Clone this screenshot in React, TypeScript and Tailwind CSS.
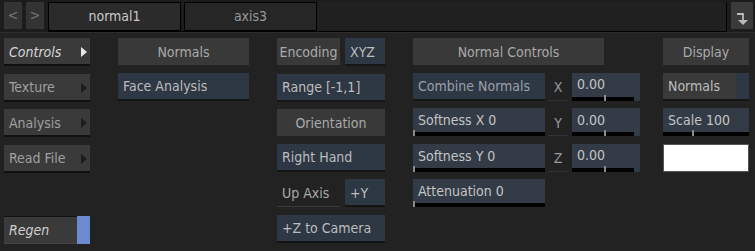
import React from "react";

const font = { fontFamily: '"DejaVu Sans Condensed", "DejaVu Sans", sans-serif' };

function Header({ label, w }: { label: string; w: string }) {
  return (
    <div className={`${w} flex h-[27px] items-center justify-center bg-[#393939] pt-[1px] text-[14px] text-[#a9a9a9]`}>
      {label}
    </div>
  );
}

function MenuButton({ label, active }: { label: string; active?: boolean }) {
  return (
    <div className="flex h-[28px] w-[86px] items-center justify-between border-b-2 border-[#101010] bg-[#3a3a3a] pl-[5px] pr-[3px] pt-[2px]">
      <span className={active ? "text-[14px] italic text-[#d8d8d8]" : "text-[14px] text-[#a0a0a0]"}>{label}</span>
      <span
        className={`h-0 w-0 border-y-[5px] border-l-[6px] border-y-transparent ${
          active ? "border-l-[#e8e8e8]" : "border-l-[#1c1c1c]"
        }`}
      />
    </div>
  );
}

function Field({ label, w, center, muted }: { label: string; w: string; center?: boolean; muted?: boolean }) {
  return (
    <div
      className={`${w} flex h-[28px] items-center border-b-2 border-[#151515] bg-[#2e3744] px-[5px] pt-[2px] text-[14px] ${
        center ? "justify-center" : ""
      } ${muted ? "text-[#9aa0a8]" : "text-[#bdbdbd]"}`}
    >
      {label}
    </div>
  );
}

function Slider({ label, w, tick }: { label: string; w: string; tick: number }) {
  return (
    <div className={`${w} flex h-[28px] flex-col bg-[#333b47]`}>
      <div className="flex flex-1 items-center px-[5px] pt-[1px] text-[14px] text-[#c4c4c4]">{label}</div>
      <div className="relative h-[4px] bg-black">
        <span className="absolute bottom-0 h-[6px] w-[2px] bg-[#8a8a8a]" style={{ left: `${tick}%` }} />
      </div>
    </div>
  );
}

function AxisRow({ axis }: { axis: string }) {
  return (
    <div className="flex h-[28px] items-stretch gap-[4px]">
      <div className="flex w-[20px] items-center justify-center border-b border-[#333] pt-[3px] text-[14px] text-[#9a9a9a]">
        {axis}
      </div>
      <div className="flex w-[68px] flex-col bg-[#333b47]">
        <div className="flex flex-1 items-center px-[5px] text-[14px] text-[#c4c4c4]">0.00</div>
        <div className="relative mr-[6px] h-[4px] bg-black">
          <span className="absolute bottom-0 left-[51%] h-[6px] w-[2px] bg-[#8a8a8a]" />
        </div>
      </div>
    </div>
  );
}

export default function App() {
  return (
    <div className="h-[251px] w-[755px] overflow-hidden bg-[#222222]" style={font}>
      {/* tab strip */}
      <div className="flex h-[33px] items-stretch gap-[4px] border-b border-[#2c2c2c] bg-[#1c1c1c] pl-[4px] pr-[2px] pt-[2px]">
        <div className="mb-[3px] flex w-[18px] items-center justify-center bg-[#333] text-[14px] text-[#777]">&lt;</div>
        <div className="mb-[3px] flex w-[18px] items-center justify-center bg-[#333] text-[14px] text-[#777]">&gt;</div>
        <div className="flex flex-1 border-b border-black">
          <div className="flex w-[133px] items-center justify-center border border-black bg-[#2b2b2b] text-[14px] text-[#c8c8c8]">
            normal1
          </div>
          <div className="ml-[3px] flex w-[133px] items-center justify-center border border-black bg-[#262626] text-[14px] text-[#9a9a9a]">
            axis3
          </div>
          <div className="flex-1 border-r border-black bg-[#202020]" />
        </div>
        <div className="mb-[3px] flex w-[22px] items-end justify-center bg-[#3a3a3a] pb-[3px]">
          <svg width="14" height="16" viewBox="0 0 14 16">
            <path d="M2 4 H8 V11" stroke="#bbb" strokeWidth="1.8" fill="none" />
            <path d="M3 10 H13 L8 15 Z" fill="#bbb" />
          </svg>
        </div>
      </div>

      {/* body */}
      <div className="flex pl-[4px] pt-[5px]">
        <div className="flex w-[86px] flex-col gap-[7.5px]">
          <MenuButton label="Controls" active />
          <MenuButton label="Texture" />
          <MenuButton label="Analysis" />
          <MenuButton label="Read File" />
          <div className="h-[28px]" />
          <div className="flex h-[28px]">
            <div className="flex flex-1 items-center border-t border-[#111] border-b border-b-[#444] bg-[#3a3a3a] pl-[5px] pt-[2px] text-[14px] italic text-[#d0d0d0]">
              Regen
            </div>
            <div className="w-[13px] bg-[#6b8acf]" />
          </div>
        </div>

        <div className="ml-[28px] flex w-[131px] flex-col gap-[7.5px]">
          <Header label="Normals" w="w-[131px]" />
          <Field label="Face Analysis" w="w-[131px]" />
        </div>

        <div className="ml-[28px] flex w-[108px] flex-col gap-[7.5px]">
          <div className="flex gap-[5px]">
            <div className="flex h-[27px] w-[63px] items-center justify-center bg-[#393939] pt-[1px] text-[14px] text-[#a9a9a9]">
              Encoding
            </div>
            <Field label="XYZ" w="w-[40px]" />
          </div>
          <Field label="Range [-1,1]" w="w-[108px]" />
          <Header label="Orientation" w="w-[108px]" />
          <Field label="Right Hand" w="w-[108px]" />
          <div className="flex gap-[5px]">
            <div className="flex h-[28px] w-[63px] items-center border-b border-[#3a3a3a] pl-[5px] pt-[1px] text-[14px] text-[#a9a9a9]">
              Up Axis
            </div>
            <Field label="+Y" w="w-[40px]" />
          </div>
          <Field label="+Z to Camera" w="w-[108px]" />
        </div>

        <div className="ml-[28px] flex w-[227px] flex-col gap-[7.5px]">
          <Header label="Normal Controls" w="w-[191px]" />
          <div className="flex gap-[3px]">
            <div className="flex w-[132px] flex-col gap-[7.5px]">
              <Field label="Combine Normals" w="w-[132px]" muted />
              <Slider label="Softness X 0" w="w-[132px]" tick={0} />
              <Slider label="Softness Y 0" w="w-[132px]" tick={0} />
              <Slider label="Attenuation 0" w="w-[132px]" tick={0} />
            </div>
            <div className="flex flex-col gap-[7.5px]">
              <AxisRow axis="X" />
              <AxisRow axis="Y" />
              <AxisRow axis="Z" />
            </div>
          </div>
        </div>

        <div className="ml-[23px] flex w-[86px] flex-col gap-[7.5px]">
          <Header label="Display" w="w-[86px]" />
          <div className="flex h-[28px] border-b-2 border-[#151515]">
            <div className="flex flex-1 items-center bg-[#3a3a3a] pl-[5px] pt-[2px] text-[14px] text-[#bdbdbd]">Normals</div>
            <div className="w-[13px] bg-[#2e3744]" />
          </div>
          <Slider label="Scale 100" w="w-[86px]" tick={34} />
          <div className="h-[28px] border border-[#555] bg-white" />
        </div>
      </div>
    </div>
  );
}
